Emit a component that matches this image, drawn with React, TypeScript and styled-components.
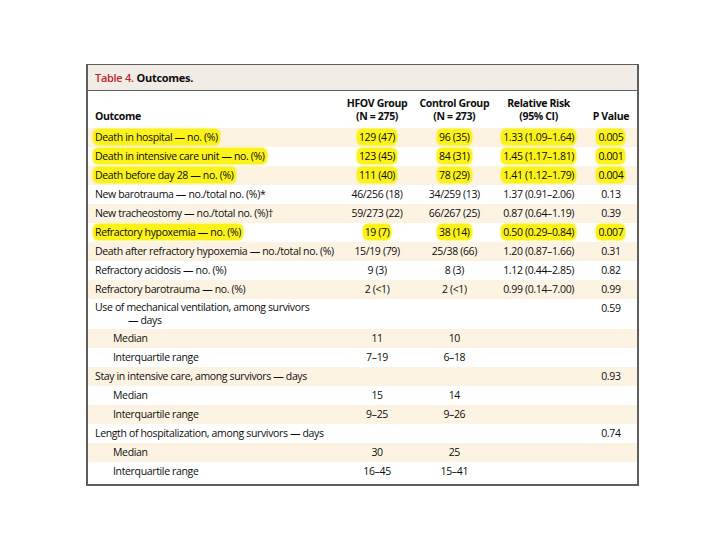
import React from "react";
import styled, { createGlobalStyle } from "styled-components";

const GlobalStyle = createGlobalStyle`
  html, body { margin: 0; padding: 0; background: #ffffff; }
  body { font-family: "Open Sans", "Lato", sans-serif; color: #0d0d0d; }
`;

const Page = styled.div`
  width: 720px;
  height: 540px;
  box-sizing: border-box;
  padding: 64px 0 0 86px;
  background: #ffffff;
`;

const Frame = styled.div`
  width: 553px;
  box-sizing: border-box;
  border: 2px solid #5e5e5e;
  border-top-width: 1px;
  padding-bottom: 3px;
`;

const TitleBar = styled.div`
  height: 25px;
  display: flex;
  align-items: center;
  padding-left: 7px;
  background: #f2ece6;
  border-bottom: 1px solid #5e5e5e;
  font-size: 11px;
  font-weight: 700;
  letter-spacing: -0.3px;
`;

const TableNo = styled.span`
  color: #c1272d;
  font-weight: 600;
  margin-right: 3px;
`;

const Table = styled.table`
  width: 100%;
  border-collapse: collapse;
  table-layout: fixed;
  font-size: 10.5px;
  letter-spacing: -0.35px;
`;

const HeadCell = styled.th<{ $align?: "left" | "center" }>`
  text-align: ${(p) => p.$align ?? "center"};
  vertical-align: bottom;
  font-weight: 700;
  line-height: 13px;
  padding: 6px 0 5px ${(p) => (p.$align === "left" ? "7px" : "0")};
  white-space: nowrap;
`;

const Row = styled.tr<{ $shaded?: boolean }>`
  background: ${(p) => (p.$shaded ? "#fdf3e3" : "#ffffff")};
`;

const LabelCell = styled.td<{ $indent?: boolean; $wrap?: boolean }>`
  text-align: left;
  vertical-align: top;
  line-height: 13px;
  padding: ${(p) => (p.$wrap ? "2px" : "3px")} 0
    ${(p) => (p.$wrap ? "2px" : "3px")} ${(p) => (p.$indent ? "25px" : "7px")};
  white-space: ${(p) => (p.$wrap ? "normal" : "nowrap")};
`;

const ValueCell = styled.td`
  text-align: center;
  vertical-align: top;
  line-height: 13px;
  padding: 3px 0;
  white-space: nowrap;
`;

const Hanging = styled.span`
  display: block;
  padding-left: 33px;
`;

const Mark = styled.span`
  background: #fbf21a;
  border-radius: 5px;
  padding: 1px 2px;
  margin: 0 -2px;
  box-shadow: 0 0 1.5px 0.5px #fbf21a;
`;

type R = {
  label: string;
  v: [string, string, string, string];
  hl?: boolean;
  indent?: boolean;
  sub?: string;
};

const rows: R[] = [
  { label: "Death in hospital — no. (%)", v: ["129 (47)", "96 (35)", "1.33 (1.09–1.64)", "0.005"], hl: true },
  { label: "Death in intensive care unit — no. (%)", v: ["123 (45)", "84 (31)", "1.45 (1.17–1.81)", "0.001"], hl: true },
  { label: "Death before day 28 — no. (%)", v: ["111 (40)", "78 (29)", "1.41 (1.12–1.79)", "0.004"], hl: true },
  { label: "New barotrauma — no./total no. (%)*", v: ["46/256 (18)", "34/259 (13)", "1.37 (0.91–2.06)", "0.13"] },
  { label: "New tracheostomy — no./total no. (%)†", v: ["59/273 (22)", "66/267 (25)", "0.87 (0.64–1.19)", "0.39"] },
  { label: "Refractory hypoxemia — no. (%)", v: ["19 (7)", "38 (14)", "0.50 (0.29–0.84)", "0.007"], hl: true },
  { label: "Death after refractory hypoxemia — no./total no. (%)", v: ["15/19 (79)", "25/38 (66)", "1.20 (0.87–1.66)", "0.31"] },
  { label: "Refractory acidosis — no. (%)", v: ["9 (3)", "8 (3)", "1.12 (0.44–2.85)", "0.82"] },
  { label: "Refractory barotrauma — no. (%)", v: ["2 (<1)", "2 (<1)", "0.99 (0.14–7.00)", "0.99"] },
  { label: "Use of mechanical ventilation, among survivors", sub: "— days", v: ["", "", "", "0.59"] },
  { label: "Median", indent: true, v: ["11", "10", "", ""] },
  { label: "Interquartile range", indent: true, v: ["7–19", "6–18", "", ""] },
  { label: "Stay in intensive care, among survivors — days", v: ["", "", "", "0.93"] },
  { label: "Median", indent: true, v: ["15", "14", "", ""] },
  { label: "Interquartile range", indent: true, v: ["9–25", "9–26", "", ""] },
  { label: "Length of hospitalization, among survivors — days", v: ["", "", "", "0.74"] },
  { label: "Median", indent: true, v: ["30", "25", "", ""] },
  { label: "Interquartile range", indent: true, v: ["16–45", "15–41", "", ""] },
];

const Cell = ({ text, hl }: { text: string; hl?: boolean }) => (
  <ValueCell>{text ? hl ? <Mark>{text}</Mark> : text : null}</ValueCell>
);

export default function App() {
  return (
    <Page>
      <GlobalStyle />
      <Frame>
        <TitleBar>
          <TableNo>Table 4.</TableNo>
          <span>Outcomes.</span>
        </TitleBar>
        <Table>
          <colgroup>
            <col style={{ width: 249 }} />
            <col style={{ width: 78 }} />
            <col style={{ width: 76 }} />
            <col style={{ width: 92 }} />
            <col style={{ width: 52 }} />
          </colgroup>
          <thead>
            <tr>
              <HeadCell $align="left">Outcome</HeadCell>
              <HeadCell>
                HFOV Group
                <br />
                (N = 275)
              </HeadCell>
              <HeadCell>
                Control Group
                <br />
                (N = 273)
              </HeadCell>
              <HeadCell>
                Relative Risk
                <br />
                (95% CI)
              </HeadCell>
              <HeadCell>P Value</HeadCell>
            </tr>
          </thead>
          <tbody>
            {rows.map((r, i) => (
              <Row key={i} $shaded={i % 2 === 0}>
                <LabelCell $indent={r.indent} $wrap={!!r.sub}>
                  {r.hl ? <Mark>{r.label}</Mark> : r.label}
                  {r.sub ? <Hanging>{r.sub}</Hanging> : null}
                </LabelCell>
                {r.v.map((t, j) => (
                  <Cell key={j} text={t} hl={r.hl} />
                ))}
              </Row>
            ))}
          </tbody>
        </Table>
      </Frame>
    </Page>
  );
}
